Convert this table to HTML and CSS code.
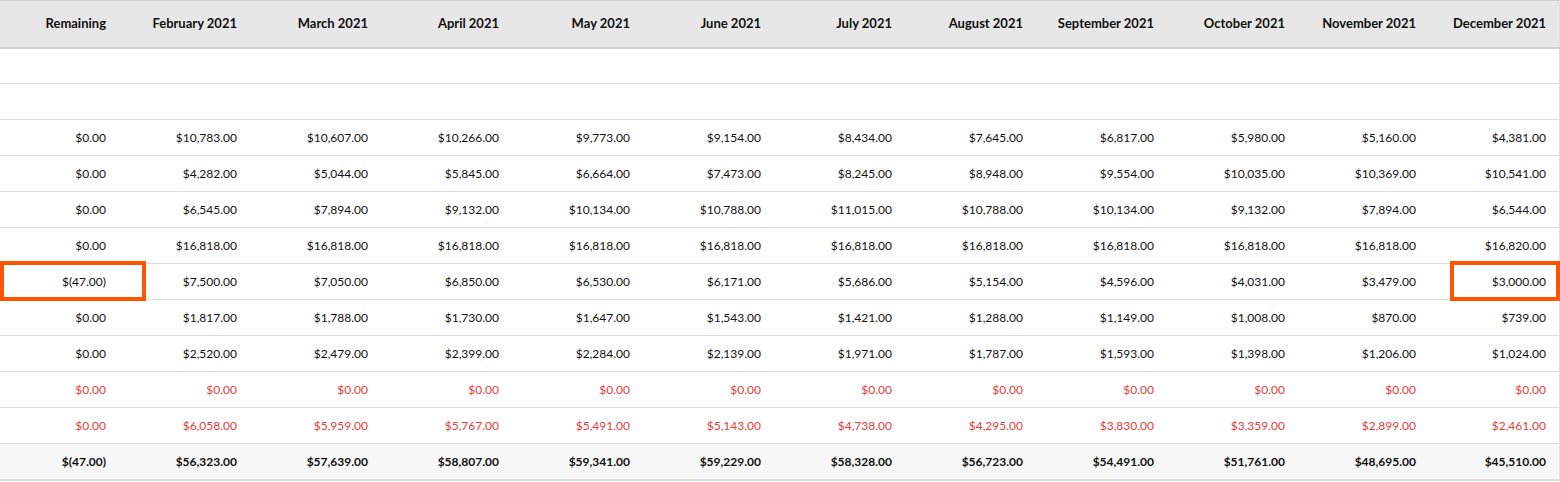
FILE: index.html
```html
<!DOCTYPE html>
<html>
<head>
<meta charset="utf-8">
<link rel="stylesheet" href="styles.css">
</head>
<body>
<div class="wrap">
<table class="grid">
<colgroup><col class="c-first"><col class="c"><col class="c"><col class="c"><col class="c"><col class="c"><col class="c"><col class="c"><col class="c"><col class="c"><col class="c"><col class="c"></colgroup>
<thead>
<tr><th>Remaining</th><th>February 2021</th><th>March 2021</th><th>April 2021</th><th>May 2021</th><th>June 2021</th><th>July 2021</th><th>August 2021</th><th>September 2021</th><th>October 2021</th><th>November 2021</th><th>December 2021</th></tr>
</thead>
<tbody>
<tr><td></td><td></td><td></td><td></td><td></td><td></td><td></td><td></td><td></td><td></td><td></td><td></td></tr>
<tr><td></td><td></td><td></td><td></td><td></td><td></td><td></td><td></td><td></td><td></td><td></td><td></td></tr>
<tr><td>$0.00</td><td>$10,783.00</td><td>$10,607.00</td><td>$10,266.00</td><td>$9,773.00</td><td>$9,154.00</td><td>$8,434.00</td><td>$7,645.00</td><td>$6,817.00</td><td>$5,980.00</td><td>$5,160.00</td><td>$4,381.00</td></tr>
<tr><td>$0.00</td><td>$4,282.00</td><td>$5,044.00</td><td>$5,845.00</td><td>$6,664.00</td><td>$7,473.00</td><td>$8,245.00</td><td>$8,948.00</td><td>$9,554.00</td><td>$10,035.00</td><td>$10,369.00</td><td>$10,541.00</td></tr>
<tr><td>$0.00</td><td>$6,545.00</td><td>$7,894.00</td><td>$9,132.00</td><td>$10,134.00</td><td>$10,788.00</td><td>$11,015.00</td><td>$10,788.00</td><td>$10,134.00</td><td>$9,132.00</td><td>$7,894.00</td><td>$6,544.00</td></tr>
<tr><td>$0.00</td><td>$16,818.00</td><td>$16,818.00</td><td>$16,818.00</td><td>$16,818.00</td><td>$16,818.00</td><td>$16,818.00</td><td>$16,818.00</td><td>$16,818.00</td><td>$16,818.00</td><td>$16,818.00</td><td>$16,820.00</td></tr>
<tr><td>$(47.00)</td><td>$7,500.00</td><td>$7,050.00</td><td>$6,850.00</td><td>$6,530.00</td><td>$6,171.00</td><td>$5,686.00</td><td>$5,154.00</td><td>$4,596.00</td><td>$4,031.00</td><td>$3,479.00</td><td>$3,000.00</td></tr>
<tr><td>$0.00</td><td>$1,817.00</td><td>$1,788.00</td><td>$1,730.00</td><td>$1,647.00</td><td>$1,543.00</td><td>$1,421.00</td><td>$1,288.00</td><td>$1,149.00</td><td>$1,008.00</td><td>$870.00</td><td>$739.00</td></tr>
<tr><td>$0.00</td><td>$2,520.00</td><td>$2,479.00</td><td>$2,399.00</td><td>$2,284.00</td><td>$2,139.00</td><td>$1,971.00</td><td>$1,787.00</td><td>$1,593.00</td><td>$1,398.00</td><td>$1,206.00</td><td>$1,024.00</td></tr>
<tr class="neg"><td>$0.00</td><td>$0.00</td><td>$0.00</td><td>$0.00</td><td>$0.00</td><td>$0.00</td><td>$0.00</td><td>$0.00</td><td>$0.00</td><td>$0.00</td><td>$0.00</td><td>$0.00</td></tr>
<tr class="neg"><td>$0.00</td><td>$6,058.00</td><td>$5,959.00</td><td>$5,767.00</td><td>$5,491.00</td><td>$5,143.00</td><td>$4,738.00</td><td>$4,295.00</td><td>$3,830.00</td><td>$3,359.00</td><td>$2,899.00</td><td>$2,461.00</td></tr>
<tr class="total"><td>$(47.00)</td><td>$56,323.00</td><td>$57,639.00</td><td>$58,807.00</td><td>$59,341.00</td><td>$59,229.00</td><td>$58,328.00</td><td>$56,723.00</td><td>$54,491.00</td><td>$51,761.00</td><td>$48,695.00</td><td>$45,510.00</td></tr>
</tbody>
</table>
<div class="mark mark-left"></div>
<div class="mark mark-right"></div>
</div>
</body>
</html>
```

FILE: styles.css
```css
html, body {
  margin: 0;
  padding: 0;
  background: #ffffff;
}
body {
  font-family: Lato, "Liberation Sans", sans-serif;
  color: #111111;
}
.wrap {
  position: relative;
  width: 1560px;
  height: 482px;
  overflow: hidden;
}
.grid {
  border-collapse: collapse;
  table-layout: fixed;
  width: 1560px;
}
.c-first { width: 119px; }
.c { width: 131px; }
.grid th {
  height: 47px;
  padding: 0 13px 1px 0;
  box-sizing: border-box;
  text-align: right;
  font-size: 13px;
  font-weight: 700;
  background: #e7e7e7;
  border-top: 1px solid #cfcfcf;
  border-bottom: 2px solid #d0d0d0;
  white-space: nowrap;
}
.grid td {
  height: 36px;
  padding: 0 13px 0 0;
  box-sizing: border-box;
  text-align: right;
  font-size: 12px;
  border-bottom: 1px solid #dcdcdc;
  white-space: nowrap;
}
.grid tr.neg td { color: #e2403a; }
.grid tr.total td {
  background: #f7f7f7;
  font-weight: 700;
  border-bottom: 2px solid #dcdcdc;
}
.grid th:last-child, .grid td:last-child {
  border-right: 2px solid #e2e2e2;
}
.mark {
  position: absolute;
  border: 4px solid #ff5500;
  box-sizing: border-box;
}
.mark-left {
  left: 0;
  top: 261px;
  width: 146px;
  height: 40px;
}
.mark-right {
  left: 1450px;
  top: 261px;
  width: 110px;
  height: 40px;
}
```
